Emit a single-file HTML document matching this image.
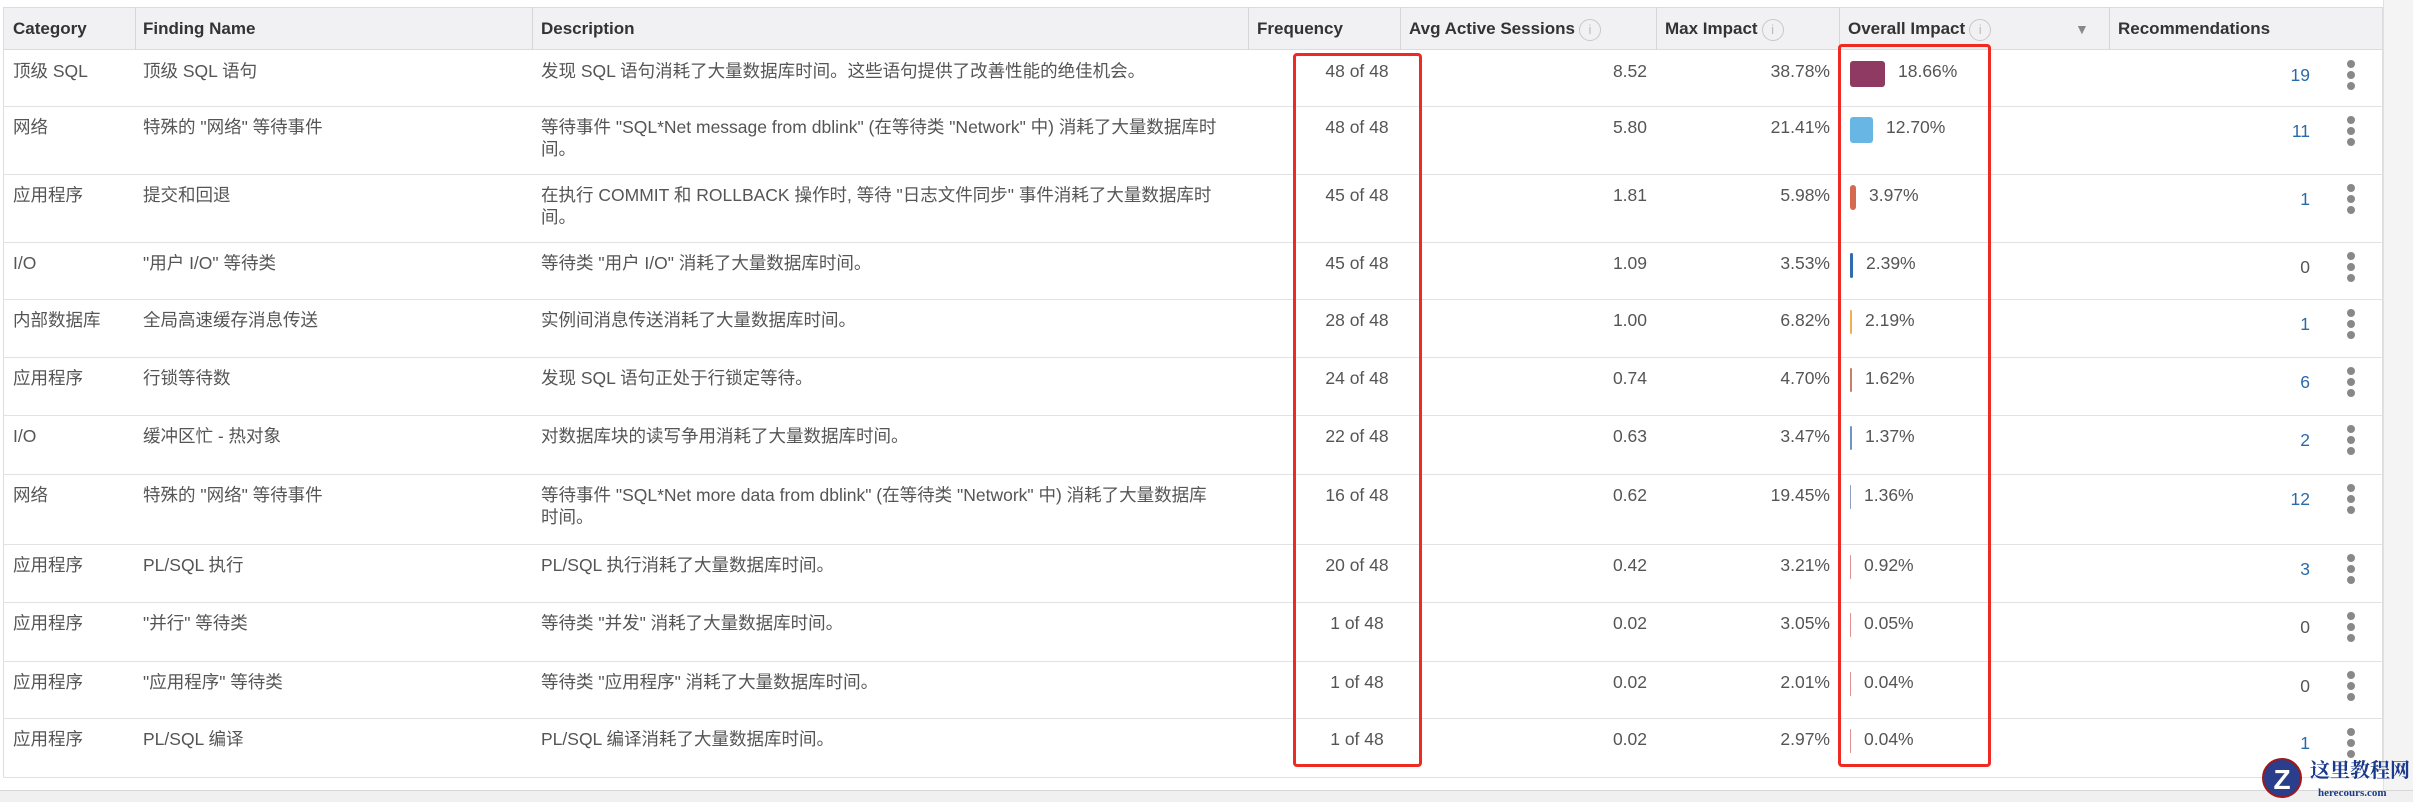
<!DOCTYPE html>
<html><head><meta charset="utf-8">
<style>
*{margin:0;padding:0;box-sizing:border-box}
body{width:2413px;height:802px;background:#fff;position:relative;overflow:hidden;font-family:"Liberation Sans","Noto Sans CJK SC",sans-serif;color:#555;font-size:17.5px}
.t{position:absolute;white-space:nowrap;line-height:22px}
.hdr{position:absolute;left:3px;top:7px;width:2380px;height:43px;background:#f1f1f3;border:1px solid #dcdcdc}
.hl{position:absolute;top:7px;height:43px;width:1px;background:#d6d6d6}
.h{position:absolute;top:18px;font-weight:bold;color:#333;font-size:17px;line-height:22px;white-space:nowrap}
.rl{position:absolute;left:3px;width:2380px;height:1px;background:#e2e2e2}
.i{display:inline-block;width:22px;height:22px;border:1.5px solid #c8c8c8;border-radius:50%;color:#bbb;font-size:13px;text-align:center;line-height:19px;font-weight:normal;vertical-align:middle;margin-left:4px}
.r{text-align:right}
.sw{position:absolute;border-radius:3px}
.k{position:absolute;width:8px}
.k i{display:block;width:8px;height:8px;border-radius:50%;background:#888;margin-bottom:3px}
.box{position:absolute;border:3px solid #ee2a22;border-radius:4px}
</style></head><body>
<div class="hdr"></div>
<div class="hl" style="left:135px"></div>
<div class="hl" style="left:532px"></div>
<div class="hl" style="left:1248px"></div>
<div class="hl" style="left:1400px"></div>
<div class="hl" style="left:1656px"></div>
<div class="hl" style="left:1839px"></div>
<div class="hl" style="left:2109px"></div>
<div class="h" style="left:13px">Category</div>
<div class="h" style="left:143px">Finding Name</div>
<div class="h" style="left:541px">Description</div>
<div class="h" style="left:1257px">Frequency</div>
<div class="h" style="left:1409px">Avg Active Sessions<span class="i">i</span></div>
<div class="h" style="left:1665px">Max Impact<span class="i">i</span></div>
<div class="h" style="left:1848px">Overall Impact<span class="i">i</span></div>
<div class="h" style="left:2075px;color:#888;font-size:14px">▼</div>
<div class="h" style="left:2118px">Recommendations</div>
<div style="position:absolute;left:2383px;top:0;width:30px;height:790px;background:#f4f4f4;border-left:1px solid #e0e0e0"></div>
<div style="position:absolute;left:3px;top:50px;width:1px;height:728px;background:#ddd"></div>
<div style="position:absolute;left:2382px;top:50px;width:1px;height:728px;background:#ddd"></div>
<div style="position:absolute;left:0;top:790px;width:2413px;height:12px;background:#f0f0f0;border-top:1px solid #d6d6d6"></div>
<div id="rows"></div>
<script>
var rows=[
["顶级 SQL","顶级 SQL 语句","发现 SQL 语句消耗了大量数据库时间。这些语句提供了改善性能的绝佳机会。","","48 of 48","8.52","38.78%","18.66%",35,26,"#8e3a63","19",1],
["网络","特殊的 \"网络\" 等待事件","等待事件 \"SQL*Net message from dblink\" (在等待类 \"Network\" 中) 消耗了大量数据库时","间。","48 of 48","5.80","21.41%","12.70%",23,26,"#67b6e4","11",1],
["应用程序","提交和回退","在执行 COMMIT 和 ROLLBACK 操作时, 等待 \"日志文件同步\" 事件消耗了大量数据库时","间。","45 of 48","1.81","5.98%","3.97%",6,25,"#d46a4f","1",1],
["I/O","\"用户 I/O\" 等待类","等待类 \"用户 I/O\" 消耗了大量数据库时间。","","45 of 48","1.09","3.53%","2.39%",3,25,"#2f6cb0","0",0],
["内部数据库","全局高速缓存消息传送","实例间消息传送消耗了大量数据库时间。","","28 of 48","1.00","6.82%","2.19%",2,24,"#f0b050","1",1],
["应用程序","行锁等待数","发现 SQL 语句正处于行锁定等待。","","24 of 48","0.74","4.70%","1.62%",2,24,"#c8806a","6",1],
["I/O","缓冲区忙 - 热对象","对数据库块的读写争用消耗了大量数据库时间。","","22 of 48","0.63","3.47%","1.37%",2,24,"#6a96c8","2",1],
["网络","特殊的 \"网络\" 等待事件","等待事件 \"SQL*Net more data from dblink\" (在等待类 \"Network\" 中) 消耗了大量数据库","时间。","16 of 48","0.62","19.45%","1.36%",1,24,"#8aa0c0","12",1],
["应用程序","PL/SQL 执行","PL/SQL 执行消耗了大量数据库时间。","","20 of 48","0.42","3.21%","0.92%",1,24,"#e09090","3",1],
["应用程序","\"并行\" 等待类","等待类 \"并发\" 消耗了大量数据库时间。","","1 of 48","0.02","3.05%","0.05%",1,24,"#e09090","0",0],
["应用程序","\"应用程序\" 等待类","等待类 \"应用程序\" 消耗了大量数据库时间。","","1 of 48","0.02","2.01%","0.04%",1,24,"#e09090","0",0],
["应用程序","PL/SQL 编译","PL/SQL 编译消耗了大量数据库时间。","","1 of 48","0.02","2.97%","0.04%",1,24,"#e09090","1",1]];
var tops=[50,106,174,242,299,357,415,474,544,602,661,718,777];
var h="";
for(var i=0;i<rows.length;i++){var r=rows[i],y=tops[i]+10;
h+='<div class="t" style="left:13px;top:'+y+'px">'+r[0]+'</div>';
h+='<div class="t" style="left:143px;top:'+y+'px">'+r[1]+'</div>';
h+='<div class="t" style="left:541px;top:'+y+'px">'+r[2]+(r[3]?'<br>'+r[3]:'')+'</div>';
h+='<div class="t" style="left:1294px;width:126px;text-align:center;top:'+y+'px">'+r[4]+'</div>';
h+='<div class="t r" style="left:1500px;width:147px;top:'+y+'px">'+r[5]+'</div>';
h+='<div class="t r" style="left:1680px;width:150px;top:'+y+'px">'+r[6]+'</div>';
h+='<div class="sw" style="left:1850px;top:'+(y+1)+'px;width:'+r[8]+'px;height:'+r[9]+'px;background:'+r[10]+'"></div>';
h+='<div class="t" style="left:'+(1850+r[8]+13)+'px;top:'+y+'px">'+r[7]+'</div>';
h+='<div class="t r" style="left:2200px;width:110px;top:'+(y+4)+'px;'+(r[12]?'color:#2a6aa8':'')+'">'+r[11]+'</div>';
h+='<div class="k" style="left:2347px;top:'+(y)+'px"><i></i><i></i><i></i></div>';
h+='<div class="rl" style="top:'+tops[i+1]+'px"></div>';}
h+='<div class="box" style="left:1293px;top:53px;width:129px;height:714px"></div>';
h+='<div class="box" style="left:1838px;top:44px;width:153px;height:723px"></div>';
document.getElementById("rows").innerHTML=h;
</script>
<div style="position:absolute;left:2262px;top:758px;width:40px;height:40px;border-radius:50%;background:#2a3e8c;color:#fff;font-weight:bold;font-size:28px;text-align:center;line-height:40px;border:2px solid #a01818">Z</div>
<div class="t" style="left:2310px;top:758px;font-weight:bold;color:#1a3a8c;font-size:20px;font-family:'Noto Serif CJK SC',serif">这里教程网</div>
<div class="t" style="left:2318px;top:782px;color:#1a3a8c;font-size:11px;font-family:'Liberation Serif',serif;font-weight:bold">herecours.com</div>
</body></html>
